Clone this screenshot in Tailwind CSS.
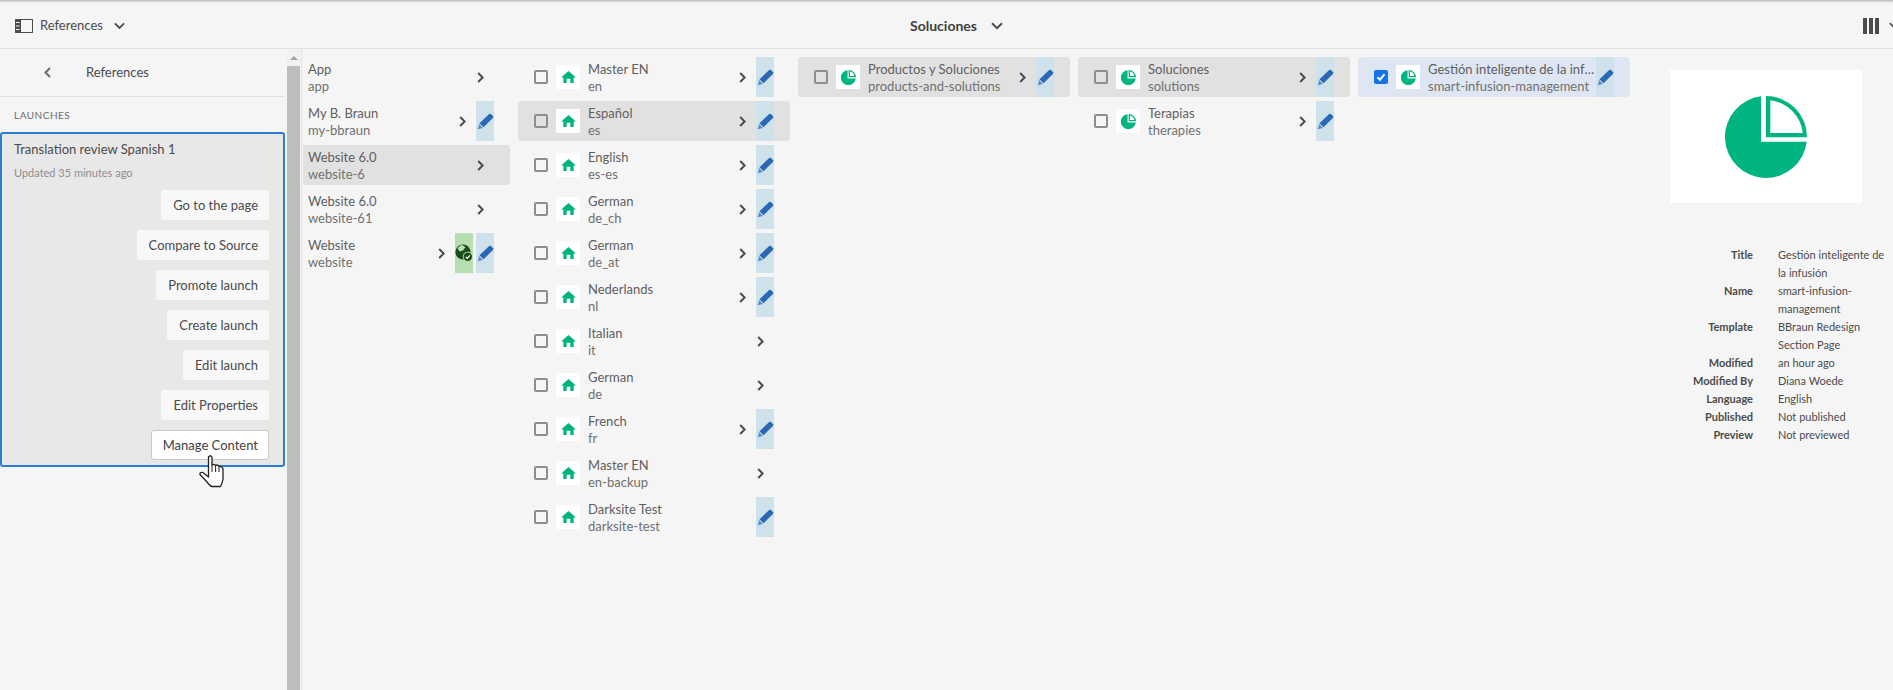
<!DOCTYPE html>
<html lang="en">
<head>
  <meta charset="UTF-8" />
  <title>Soluciones</title>
  <script src="https://cdn.jsdelivr.net/npm/@tailwindcss/browser@4"></script>
</head>
<body class="bg-[#f5f5f5] h-[690px] w-[1893px] overflow-hidden font-['Lato','Noto_Sans',sans-serif] text-[#4b4b4b] relative">
  <svg class="hidden">
    <symbol id="chev" viewBox="0 0 7 11"><path d="M1.2 1 5.7 5.5 1.2 10" fill="none" stroke="#4b4b4b" stroke-width="2"/></symbol>
    <symbol id="down" viewBox="0 0 12 8"><path d="M1 1.2 6 6.2 11 1.2" fill="none" stroke="#4b4b4b" stroke-width="2"/></symbol>
    <symbol id="pencil" viewBox="0 0 18 18"><path d="M2.6 10.9 12.6 1.2Q13.8 0.2 15 1.2L16.9 3.1Q17.8 4.3 16.8 5.4L6.9 15.2Z" fill="#2a67b5"/><path d="M2.2 11.6 6.2 15.8 .8 17.2Z" fill="#5b8dc9"/></symbol>
    <symbol id="home" viewBox="0 0 16 13"><path d="M8 0 16 7H13.6V13H10V8.4H6V13H2.4V7H0Z" fill="#00b482"/></symbol>
    <symbol id="pie" viewBox="0 0 82 82"><path d="M36 .3V45.7H81.7A41 41 0 1 1 36 .3Z" fill="#00b482"/><path fill-rule="evenodd" d="M41 0A41 41 0 0 1 82 41.3H41ZM45.3 4.2V37H77.8A37 37 0 0 0 45.3 4.2Z" fill="#00b482"/></symbol>
    <symbol id="pie-sm" viewBox="0 0 16 16"><path d="M7 .2V9H15.8A8 8 0 1 1 7 .2Z" fill="#00b482"/><path fill-rule="evenodd" d="M8.2 0A7.9 7.9 0 0 1 16 7.8H8.2ZM9.6 1.7V6.4H14.3A6.2 6.2 0 0 0 9.6 1.7Z" fill="#00b482"/></symbol>
    <symbol id="globe" viewBox="0 0 18 18"><circle cx="8" cy="8" r="7.6" fill="#1b4a1d"/><path d="M6.5 .8 10.5 3 8 6.5 4.5 7.5 2.5 4ZM9.5 9.5 14 7.5 13.5 11 10.5 14Z" fill="#b5dfb0"/><circle cx="12.8" cy="12.8" r="5" fill="#b5dfb0"/><circle cx="12.8" cy="12.8" r="4.2" fill="#1b4a1d"/><path d="M10.8 12.8 12.3 14.3 14.9 11.4" fill="none" stroke="#fff" stroke-width="1.2"/></symbol>
  </svg>

  <div class="h-[3px] bg-linear-to-b from-[#b9b9b9] to-[#f5f5f5]"></div>

  <!-- Toolbar -->
  <header class="h-[45px] flex items-center border-b border-[#e1e1e1] box-content">
    <div class="w-[910px] flex items-center pl-[15px]">
      <svg class="w-[18px] h-[14px]" viewBox="0 0 18 14"><rect x=".5" y=".5" width="17" height="13" fill="none" stroke="#4b4b4b"/><rect width="6" height="14" fill="#4b4b4b"/><path d="M1 3.5H4.5M1 7H4.5M1 10.5H4.5" stroke="#f5f5f5"/></svg>
      <span class="ml-[7px] text-[13px]">References</span>
      <svg class="ml-[11px] w-[11px] h-[8px]"><use href="#down"/></svg>
    </div>
    <span class="text-[14px] font-bold text-[#3f3f3f] -mt-[1px]">Soluciones</span>
    <svg class="ml-[14px] w-[12px] h-[8px]"><use href="#down"/></svg>
    <div class="ml-auto flex gap-[2px] shrink-0">
      <span class="w-[4px] h-[16px] bg-[#4b4b4b]"></span>
      <span class="w-[4px] h-[16px] bg-[#4b4b4b]"></span>
      <span class="w-[4px] h-[16px] bg-[#4b4b4b]"></span>
    </div>
    <svg class="ml-[10px] mr-[-6px] w-[10px] h-[7px] shrink-0"><use href="#down"/></svg>
  </header>

  <div class="flex h-[641px]">
    <!-- Left rail -->
    <aside class="w-[285px] shrink-0">
      <div class="h-[47px] flex items-center border-b border-[#e1e1e1] box-content -mb-px">
        <svg class="ml-[44px] w-[7px] h-[11px]" viewBox="0 0 7 11"><path d="M6 1 1.5 5.5 6 10" fill="none" stroke="#6e6e6e" stroke-width="2"/></svg>
        <span class="ml-[35px] text-[13px]">References</span>
      </div>
      <div class="h-[36px] pl-[14px] pt-[12px] text-[10px] tracking-[0.5px] text-[#6e6e6e]">LAUNCHES</div>
      <div class="h-[335px] border-2 border-[#2b7cd3] rounded-[3px] bg-[#e8e8e8] pl-[12px] pt-[6px] pr-[14px] flex flex-col">
        <div class="text-[13px] leading-[18px]">Translation review Spanish 1</div>
        <div class="mt-[6px] text-[11px] leading-[18px] text-[#8e8e8e]">Updated 35 minutes ago</div>
        <div id="actions" class="mt-[8px] flex flex-col items-end gap-[10px]"></div>
      </div>
    </aside>

    <!-- Scrollbar -->
    <div class="ml-[2px] w-[13px] shrink-0 bg-[#f1f1f1] flex flex-col items-center">
      <div class="h-[17px] flex items-center"><span class="w-0 h-0 border-x-[4px] border-x-transparent border-b-[4px] border-b-[#a3a3a3]"></span></div>
      <div class="w-full flex-1 bg-[#bdbdbd]"></div>
    </div>

    <!-- Miller columns -->
    <main class="pl-[1px] pt-[8px] flex items-start border-l border-[#e4e4e4] ml-[1px]">
      <div id="col1" class="w-[207px] flex flex-col gap-[4px]"></div>
      <div id="col2" class="ml-[8px] w-[272px] flex flex-col gap-[4px]"></div>
      <div id="col3" class="ml-[8px] w-[272px] flex flex-col gap-[4px]"></div>
      <div id="col4" class="ml-[8px] w-[272px] flex flex-col gap-[4px]"></div>
      <div id="col5" class="ml-[8px] w-[272px] flex flex-col gap-[4px]"></div>

      <!-- Preview pane -->
      <section class="ml-[40px] mt-[13px] w-[223px]">
        <div class="w-[192px] h-[133px] bg-white flex items-center justify-center">
          <svg class="w-[82px] h-[82px]"><use href="#pie"/></svg>
        </div>
        <dl class="mt-[43px] grid grid-cols-[83px_112px] gap-x-[25px] text-[11px] leading-[18px]">
          <dt class="text-right font-bold">Title</dt><dd>Gestión inteligente de la infusión</dd>
          <dt class="text-right font-bold">Name</dt><dd>smart-infusion-management</dd>
          <dt class="text-right font-bold">Template</dt><dd>BBraun Redesign Section Page</dd>
          <dt class="text-right font-bold">Modified</dt><dd>an hour ago</dd>
          <dt class="text-right font-bold">Modified By</dt><dd>Diana Woede</dd>
          <dt class="text-right font-bold">Language</dt><dd>English</dd>
          <dt class="text-right font-bold">Published</dt><dd>Not published</dd>
          <dt class="text-right font-bold">Preview</dt><dd>Not previewed</dd>
        </dl>
      </section>
    </main>
  </div>

  <!-- Mouse pointer over Manage Content -->
  <svg class="absolute left-[198px] top-[454px] w-[28px] h-[34px]" viewBox="0 0 28 34">
    <path d="M10.5 3Q12.3 .5 14 3V11Q16 9.5 17.6 11.4Q19.8 10.2 21 12.4Q23.5 12 25 14.5V25Q24.5 29 22.5 32.5H14Q12 32 9 28L2 20.5Q1.5 18.2 4.5 18.3L10.5 23Z" fill="#fff" stroke="#222" stroke-width="1.3" stroke-linejoin="round"/>
    <path d="M14 11V18M17.6 11.4V18M21 12.4V18" fill="none" stroke="#222" stroke-width="1"/>
  </svg>

  <script>
    const actions = ['Go to the page', 'Compare to Source', 'Promote launch', 'Create launch', 'Edit launch', 'Edit Properties'];
    document.getElementById('actions').innerHTML = actions.map(label =>
      `<button class="h-[30px] pt-[1px] pl-[12px] pr-[11px] rounded-[3px] bg-[#f8f8f8] text-[13px] text-[#4b4b4b]">${label}</button>`
    ).join('') + `<button class="h-[30px] pt-[1px] pl-[11px] pr-[10px] rounded-[3px] bg-white border border-[#c9c9c9] text-[13px] text-[#3f3f3f]">Manage Content</button>`;

    const chevron = `<span class="w-[18px] mr-[5px] shrink-0 flex justify-center"><svg class="w-[7px] h-[11px]"><use href="#chev"/></svg></span>`;
    const pencil = `<span class="w-[18px] h-full shrink-0 bg-[#cfe2ec] flex items-center justify-center"><svg class="w-[17px] h-[17px]"><use href="#pencil"/></svg></span>`;
    const globe = `<span class="w-[18px] h-full mr-[3px] shrink-0 bg-[#b5dfb0] flex items-center justify-center"><svg class="w-[18px] h-[18px]"><use href="#globe"/></svg></span>`;

    function texts(title, name) {
      return `<div class="min-w-0 flex-1 pt-[1px]">
        <div class="text-[13px] leading-[18px] truncate text-[#5f5f5f]">${title}</div>
        <div class="text-[13px] leading-[17px] truncate text-[#717171]">${name}</div>
      </div>`;
    }

    // site row: no checkbox or thumbnail
    function siteRow(r) {
      return `<div class="h-[40px] pl-[5px] pr-[16px] flex items-center rounded-r-[4px] ${r.sel ? 'bg-[#e1e1e1]' : ''}">
        ${texts(r.t, r.n)}${r.c === false ? '' : chevron}${r.g ? globe : ''}${r.p ? pencil : ''}
      </div>`;
    }

    function pageRow(r, icon) {
      const thumb = icon === 'home'
        ? `<svg class="w-[15px] h-[12px]"><use href="#home"/></svg>`
        : `<svg class="w-[15px] h-[15px]"><use href="#pie-sm"/></svg>`;
      const box = r.checked
        ? `<span class="w-[14px] h-[14px] shrink-0 rounded-[2px] bg-[#1473e6] flex items-center justify-center"><svg class="w-[10px] h-[10px]" viewBox="0 0 10 10"><path d="M1.5 5.2 4 7.8 8.5 2.2" fill="none" stroke="#fff" stroke-width="2"/></svg></span>`
        : `<span class="w-[14px] h-[14px] shrink-0 border-2 border-[#8e8e8e] rounded-[2px]"></span>`;
      return `<div class="h-[40px] pl-[16px] pr-[16px] flex items-center rounded-[4px] ${r.checked ? 'bg-[#dde6f2]' : r.sel ? 'bg-[#e1e1e1]' : ''}">
        ${box}
        <span class="ml-[8px] w-[24px] h-[24px] shrink-0 bg-white flex items-center justify-center">${thumb}</span>
        <span class="w-[8px] shrink-0"></span>
        ${texts(r.t, r.n)}${r.c === false ? '' : chevron}${r.p ? pencil : ''}
      </div>`;
    }

    document.getElementById('col1').innerHTML = [
      { t: 'App', n: 'app' },
      { t: 'My B. Braun', n: 'my-bbraun', p: 1 },
      { t: 'Website 6.0', n: 'website-6', sel: 1 },
      { t: 'Website 6.0', n: 'website-61' },
      { t: 'Website', n: 'website', g: 1, p: 1 },
    ].map(siteRow).join('');

    document.getElementById('col2').innerHTML = [
      { t: 'Master EN', n: 'en', p: 1 },
      { t: 'Español', n: 'es', p: 1, sel: 1 },
      { t: 'English', n: 'es-es', p: 1 },
      { t: 'German', n: 'de_ch', p: 1 },
      { t: 'German', n: 'de_at', p: 1 },
      { t: 'Nederlands', n: 'nl', p: 1 },
      { t: 'Italian', n: 'it' },
      { t: 'German', n: 'de' },
      { t: 'French', n: 'fr', p: 1 },
      { t: 'Master EN', n: 'en-backup' },
      { t: 'Darksite Test', n: 'darksite-test', p: 1, c: false },
    ].map(r => pageRow(r, 'home')).join('');

    document.getElementById('col3').innerHTML = pageRow({ t: 'Productos y Soluciones', n: 'products-and-solutions', p: 1, sel: 1 }, 'pie');

    document.getElementById('col4').innerHTML = [
      { t: 'Soluciones', n: 'solutions', p: 1, sel: 1 },
      { t: 'Terapias', n: 'therapies', p: 1 },
    ].map(r => pageRow(r, 'pie')).join('');

    document.getElementById('col5').innerHTML = pageRow({ t: 'Gestión inteligente de la infusión', n: 'smart-infusion-management', p: 1, c: false, checked: 1 }, 'pie');
  </script>
</body>
</html>
